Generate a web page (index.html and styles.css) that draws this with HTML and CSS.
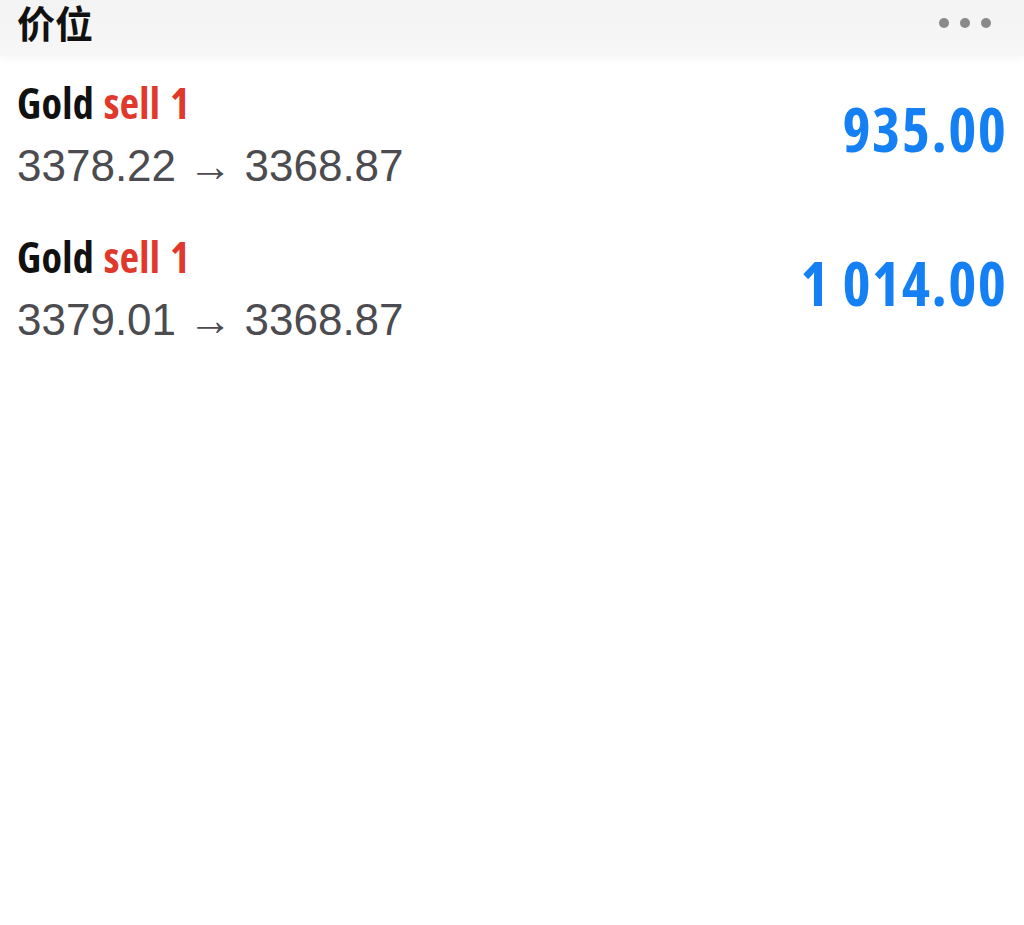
FILE: index.html
```html
<!DOCTYPE html>
<html lang="zh">

<head>
    <meta charset="UTF-8">
    <meta name="viewport" content="width=device-width, initial-scale=1.0">
    <title>价位</title>
    <link rel="stylesheet" href="styles.css">
</head>

<body>
    <div class="header">
        <div class="title">价位</div>
        <div class="more">
            <span class="dot"></span>
            <span class="dot"></span>
            <span class="dot"></span>
        </div>
    </div>

    <div class="list">
        <div class="row">
            <div class="info">
                <div class="symbol">Gold <span class="side">sell 1</span></div>
                <div class="prices">3378.22 → 3368.87</div>
            </div>
            <div class="profit">935.00</div>
        </div>

        <div class="row">
            <div class="info">
                <div class="symbol">Gold <span class="side">sell 1</span></div>
                <div class="prices">3379.01 → 3368.87</div>
            </div>
            <div class="profit">1 014.00</div>
        </div>
    </div>
</body>

</html>
```

FILE: styles.css
```css
body {
    background-color: white;
    margin: 0;
    padding: 0;
    font-family: "Liberation Sans", Arial, sans-serif;
}

.header {
    display: flex;
    justify-content: space-between;
    align-items: flex-start;
    height: 56px;
    padding: 2px 33px 0 17px;
    box-sizing: border-box;
    background: linear-gradient(#f3f3f3, #f7f7f7);
    box-shadow: 0 4px 8px rgba(0, 0, 0, 0.03);
}

.title {
    font-family: "Noto Sans CJK SC", sans-serif;
    font-weight: bold;
    font-size: 38px;
    line-height: 40px;
    color: #111;
}

.more {
    display: flex;
    gap: 11px;
    margin-top: 16px;
}

.dot {
    width: 10px;
    height: 10px;
    border-radius: 50%;
    background-color: #8a8a8a;
}

.list {
    padding: 0 17px;
}

.row {
    display: flex;
    justify-content: space-between;
    align-items: center;
    height: 154px;
}

.info {
    margin-top: 13px;
}

.symbol {
    font-family: "Open Sans", sans-serif;
    font-stretch: 75%;
    font-weight: 700;
    font-size: 42px;
    line-height: 44px;
    letter-spacing: 0.3px;
    word-spacing: 2px;
    color: #111;
}

.side {
    color: #e0392b;
}

.prices {
    margin-top: 9px;
    font-size: 44px;
    line-height: 64px;
    color: #4b4b50;
}

.profit {
    font-family: "Open Sans", sans-serif;
    font-stretch: 75%;
    font-weight: 700;
    font-size: 60px;
    letter-spacing: 1.5px;
    margin-right: -0.5px;
    color: #1580f3;
    margin-top: -8px;
}
```
